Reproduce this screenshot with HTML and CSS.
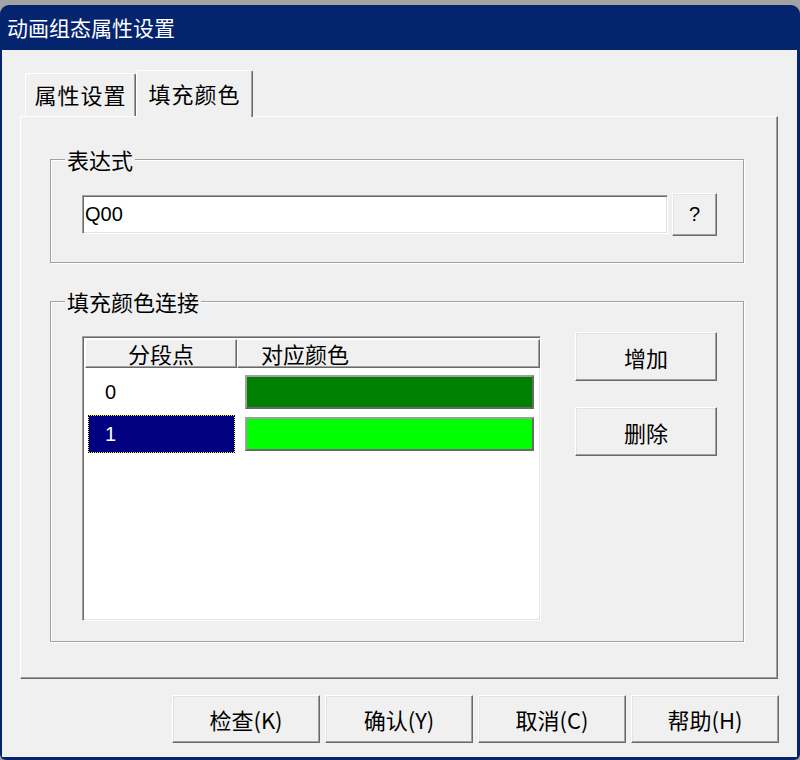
FILE: index.html
```html
<!DOCTYPE html>
<html lang="zh-CN">
  <head>
    <meta charset="UTF-8" />
    <title>动画组态属性设置</title>
    <link rel="stylesheet" href="styles.css">
  </head>
  <body>
    <div class="window">
      <div class="titlebar">动画组态属性设置</div>

      <div class="client">
        <div class="tabs">
          <div class="tab">属性设置</div>
          <div class="tab active">填充颜色</div>
        </div>

        <div class="panel">
          <!-- expression -->
          <div class="group group-expr">
            <span class="group-label">表达式</span>
            <div class="expr-row">
              <input class="textbox" type="text" value="Q00" />
              <button class="btn btn-ask">?</button>
            </div>
          </div>

          <!-- colour link -->
          <div class="group group-link">
            <span class="group-label">填充颜色连接</span>
            <div class="link-body">
              <div class="list">
                <div class="list-head">
                  <div class="head-cell col-point">分段点</div>
                  <div class="head-cell col-color">对应颜色</div>
                </div>
                <div class="list-row">
                  <div class="cell col-point"><span class="point">0</span></div>
                  <div class="cell col-color"><div class="swatch swatch-green"></div></div>
                </div>
                <div class="list-row">
                  <div class="cell col-point"><span class="point selected">1</span></div>
                  <div class="cell col-color"><div class="swatch swatch-lime"></div></div>
                </div>
              </div>
              <div class="side-buttons">
                <button class="btn btn-side">增加</button>
                <button class="btn btn-side">删除</button>
              </div>
            </div>
          </div>
        </div>

        <div class="dialog-buttons">
          <button class="btn btn-dialog">检查(K)</button>
          <button class="btn btn-dialog">确认(Y)</button>
          <button class="btn btn-dialog">取消(C)</button>
          <button class="btn btn-dialog">帮助(H)</button>
        </div>
      </div>
    </div>
  </body>
</html>
```

FILE: styles.css
```css
html,
body {
  margin: 0;
  padding: 0;
  background-color: #a3a3a3;
  font-family: "Noto Sans CJK SC", "Liberation Sans", sans-serif;
}

.window {
  margin-top: 5px;
  height: 755px;
  box-sizing: border-box;
  padding: 0 3px 3px 2px;
  background-color: #05246e;
  border-radius: 9px 9px 6px 6px;
  display: flex;
  flex-direction: column;
}

.titlebar {
  height: 45px;
  line-height: 45px;
  padding-left: 5px;
  color: #fff;
  font-size: 21px;
}

.client {
  flex: 1;
  background-color: #f0f0f0;
  padding: 20px 19px 0 18px;
}

/* tabs */
.tabs {
  display: flex;
  align-items: flex-end;
  height: 46px;
  padding-left: 5px;
}

.tab {
  box-sizing: border-box;
  width: 111px;
  height: 43px;
  line-height: 41px;
  text-align: center;
  font-size: 22px;
  letter-spacing: 1px;
  background-color: #f0f0f0;
  border: 1px solid #fff;
  border-right: 1px solid #696969;
  border-bottom: none;
  border-radius: 2px 2px 0 0;
  box-shadow: inset -1px 0 #a0a0a0;
}

.tab.active {
  position: relative;
  z-index: 1;
  width: 117px;
  height: 47px;
  margin-bottom: -1px;
  line-height: 44px;
}

.panel {
  border: 1px solid;
  border-color: #fff #696969 #696969 #fff;
  box-shadow: inset -1px -1px #a0a0a0;
  padding: 42px 33px 36px 29px;
}

/* group boxes */
.group {
  position: relative;
  border: 1px solid #a0a0a0;
  box-shadow: inset 1px 1px #fff, 1px 1px #fff;
}

.group-label {
  position: absolute;
  top: -13px;
  left: 14px;
  padding: 0 2px;
  line-height: 24px;
  font-size: 22px;
  background-color: #f0f0f0;
}

.group-expr {
  padding: 33px 25px 26px 31px;
}

.group-link {
  margin-top: 38px;
  padding: 30px 25px 20px 31px;
}

.expr-row {
  display: flex;
  align-items: center;
  gap: 4px;
}

.textbox {
  box-sizing: border-box;
  width: 586px;
  height: 39px;
  margin: 0;
  padding: 0 2px;
  font-family: "Liberation Sans", sans-serif;
  font-size: 20px;
  color: #000;
  background-color: #fff;
  border: 1px solid;
  border-color: #a0a0a0 #fff #fff #a0a0a0;
  box-shadow: inset 1px 1px #696969, inset -1px -1px #e3e3e3;
  outline: none;
}

/* buttons */
.btn {
  box-sizing: border-box;
  margin: 0;
  padding: 0;
  font-family: "Noto Sans CJK SC", "Liberation Sans", sans-serif;
  font-size: 22px;
  color: #000;
  background-color: #f0f0f0;
  border: 1px solid;
  border-color: #fff #696969 #696969 #fff;
  box-shadow: inset -1px -1px #a0a0a0, inset 1px 1px #e3e3e3;
}

.btn-ask {
  width: 45px;
  height: 43px;
  font-family: "Liberation Sans", sans-serif;
  font-size: 20px;
}

.link-body {
  display: flex;
  gap: 34px;
}

.side-buttons {
  display: flex;
  flex-direction: column;
  gap: 26px;
}

.btn-side {
  width: 142px;
  height: 49px;
}

/* list */
.list {
  box-sizing: border-box;
  width: 459px;
  height: 285px;
  margin-top: 4px;
  background-color: #fff;
  border: 1px solid;
  border-color: #a0a0a0 #fff #fff #a0a0a0;
  box-shadow: inset 1px 1px #696969, inset -1px -1px #e3e3e3;
  padding: 2px 0 0 2px;
}

.list-head,
.list-row {
  display: flex;
}

.col-point {
  width: 152px;
}

.col-color {
  width: 303px;
}

.head-cell {
  box-sizing: border-box;
  height: 29px;
  line-height: 26px;
  font-size: 22px;
  background-color: #f0f0f0;
  border: 1px solid;
  border-color: #fff #696969 #696969 #fff;
  box-shadow: inset -1px -1px #a0a0a0;
}

.head-cell.col-point {
  text-align: center;
}

.head-cell.col-color {
  padding-left: 23px;
}

.list-row {
  height: 42px;
}

.list-row:first-of-type {
  margin-top: 0;
}

.list-head + .list-row {
  margin-top: 3px;
}

.cell {
  box-sizing: border-box;
  display: flex;
  align-items: center;
}

.point {
  display: block;
  box-sizing: border-box;
  width: 147px;
  height: 38px;
  margin-left: 3px;
  padding-left: 16px;
  line-height: 36px;
  font-family: "Liberation Sans", sans-serif;
  font-size: 20px;
  border: 1px solid transparent;
}

.point.selected {
  color: #fff;
  background-color: #000080;
  border-color: #f4e86a;
  outline: 1px dotted #000;
  outline-offset: -1px;
}

.swatch {
  box-sizing: border-box;
  width: 289px;
  height: 34px;
  margin-left: 8px;
  border: 2px solid;
  border-color: #a0a0a0 #696969 #696969 #a0a0a0;
}

.swatch-green {
  background-color: #008000;
}

.swatch-lime {
  background-color: #00ff00;
}

/* dialog buttons */
.dialog-buttons {
  display: flex;
  justify-content: flex-end;
  gap: 5px;
  margin-top: 16px;
  margin-right: -1px;
}

.btn-dialog {
  width: 148px;
  height: 48px;
}
```
